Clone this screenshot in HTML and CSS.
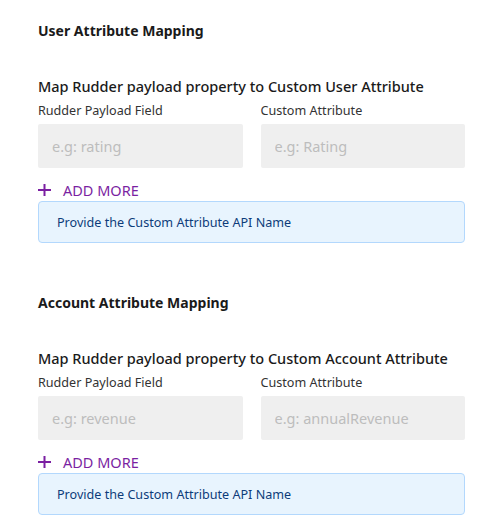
FILE: index.html
```html
<html>
<head>
<title>Attribute Mapping</title>
<link rel="stylesheet" href="styles.css">
</head>
<body>

<div class="settings">

<div class="group">
  <div class="group-title">User Attribute Mapping</div>
  <div class="mapping">
    <div class="mapping-title">Map Rudder payload property to Custom User Attribute</div>
    <div class="row">
      <div class="field">
        <label>Rudder Payload Field</label>
        <input type="text" placeholder="e.g: rating">
      </div>
      <div class="field">
        <label>Custom Attribute</label>
        <input type="text" placeholder="e.g: Rating">
      </div>
    </div>
    <button type="button" class="add-more">
      <svg class="plus" width="13" height="12" viewBox="0 0 13 12"><path d="M6.5 0V12M0 6H13" stroke="currentColor" stroke-width="2"/></svg>
      ADD MORE
    </button>
    <div class="info">Provide the Custom Attribute API Name</div>
  </div>
</div>

<div class="group">
  <div class="group-title">Account Attribute Mapping</div>
  <div class="mapping">
    <div class="mapping-title">Map Rudder payload property to Custom Account Attribute</div>
    <div class="row">
      <div class="field">
        <label>Rudder Payload Field</label>
        <input type="text" placeholder="e.g: revenue">
      </div>
      <div class="field">
        <label>Custom Attribute</label>
        <input type="text" placeholder="e.g: annualRevenue">
      </div>
    </div>
    <button type="button" class="add-more">
      <svg class="plus" width="13" height="12" viewBox="0 0 13 12"><path d="M6.5 0V12M0 6H13" stroke="currentColor" stroke-width="2"/></svg>
      ADD MORE
    </button>
    <div class="info">Provide the Custom Attribute API Name</div>
  </div>
</div>

</div>
</body>
</html>
```

FILE: styles.css
```css
body {
  margin: 0;
  background: #fff;
  color: #1a1a1a;
  font-family: "Noto Sans", "Open Sans", sans-serif;
}

.settings {
  padding: 20px 39px 0 38px;
}

.group {
  margin-bottom: 49px;
}
.group:last-child {
  margin-bottom: 0;
}

.group-title {
  font-size: 14px;
  font-weight: 700;
  line-height: 22px;
  margin-bottom: 33px;
}

.mapping-title {
  font-size: 14.5px;
  font-weight: 500;
  line-height: 22px;
}

.row {
  display: flex;
  gap: 18px;
}

.field {
  flex: 1;
}

.field label {
  display: block;
  font-size: 12.6px;
  color: #333;
  line-height: 18px;
  margin: 5px 0 4px;
}

.field input {
  box-sizing: border-box;
  width: 100%;
  height: 44px;
  border: 0;
  border-radius: 2px;
  background: #efefef;
  padding: 0 14px;
  font: inherit;
  font-size: 14.5px;
  color: #333;
}

.field input::placeholder {
  color: #bdbdbd;
}

.add-more {
  display: flex;
  align-items: center;
  border: 0;
  background: none;
  padding: 0;
  margin: 11px 0 0;
  height: 22px;
  font: inherit;
  font-size: 14.5px;
  color: #7b1fa2;
  cursor: pointer;
}

.plus {
  margin-right: 12px;
}

.info {
  box-sizing: border-box;
  height: 42px;
  border: 1px solid #b3d8fd;
  border-radius: 4px;
  background: #e8f4fe;
  color: #0d3c7a;
  font-size: 12.6px;
  line-height: 41px;
  padding: 0 18px;
}
```
